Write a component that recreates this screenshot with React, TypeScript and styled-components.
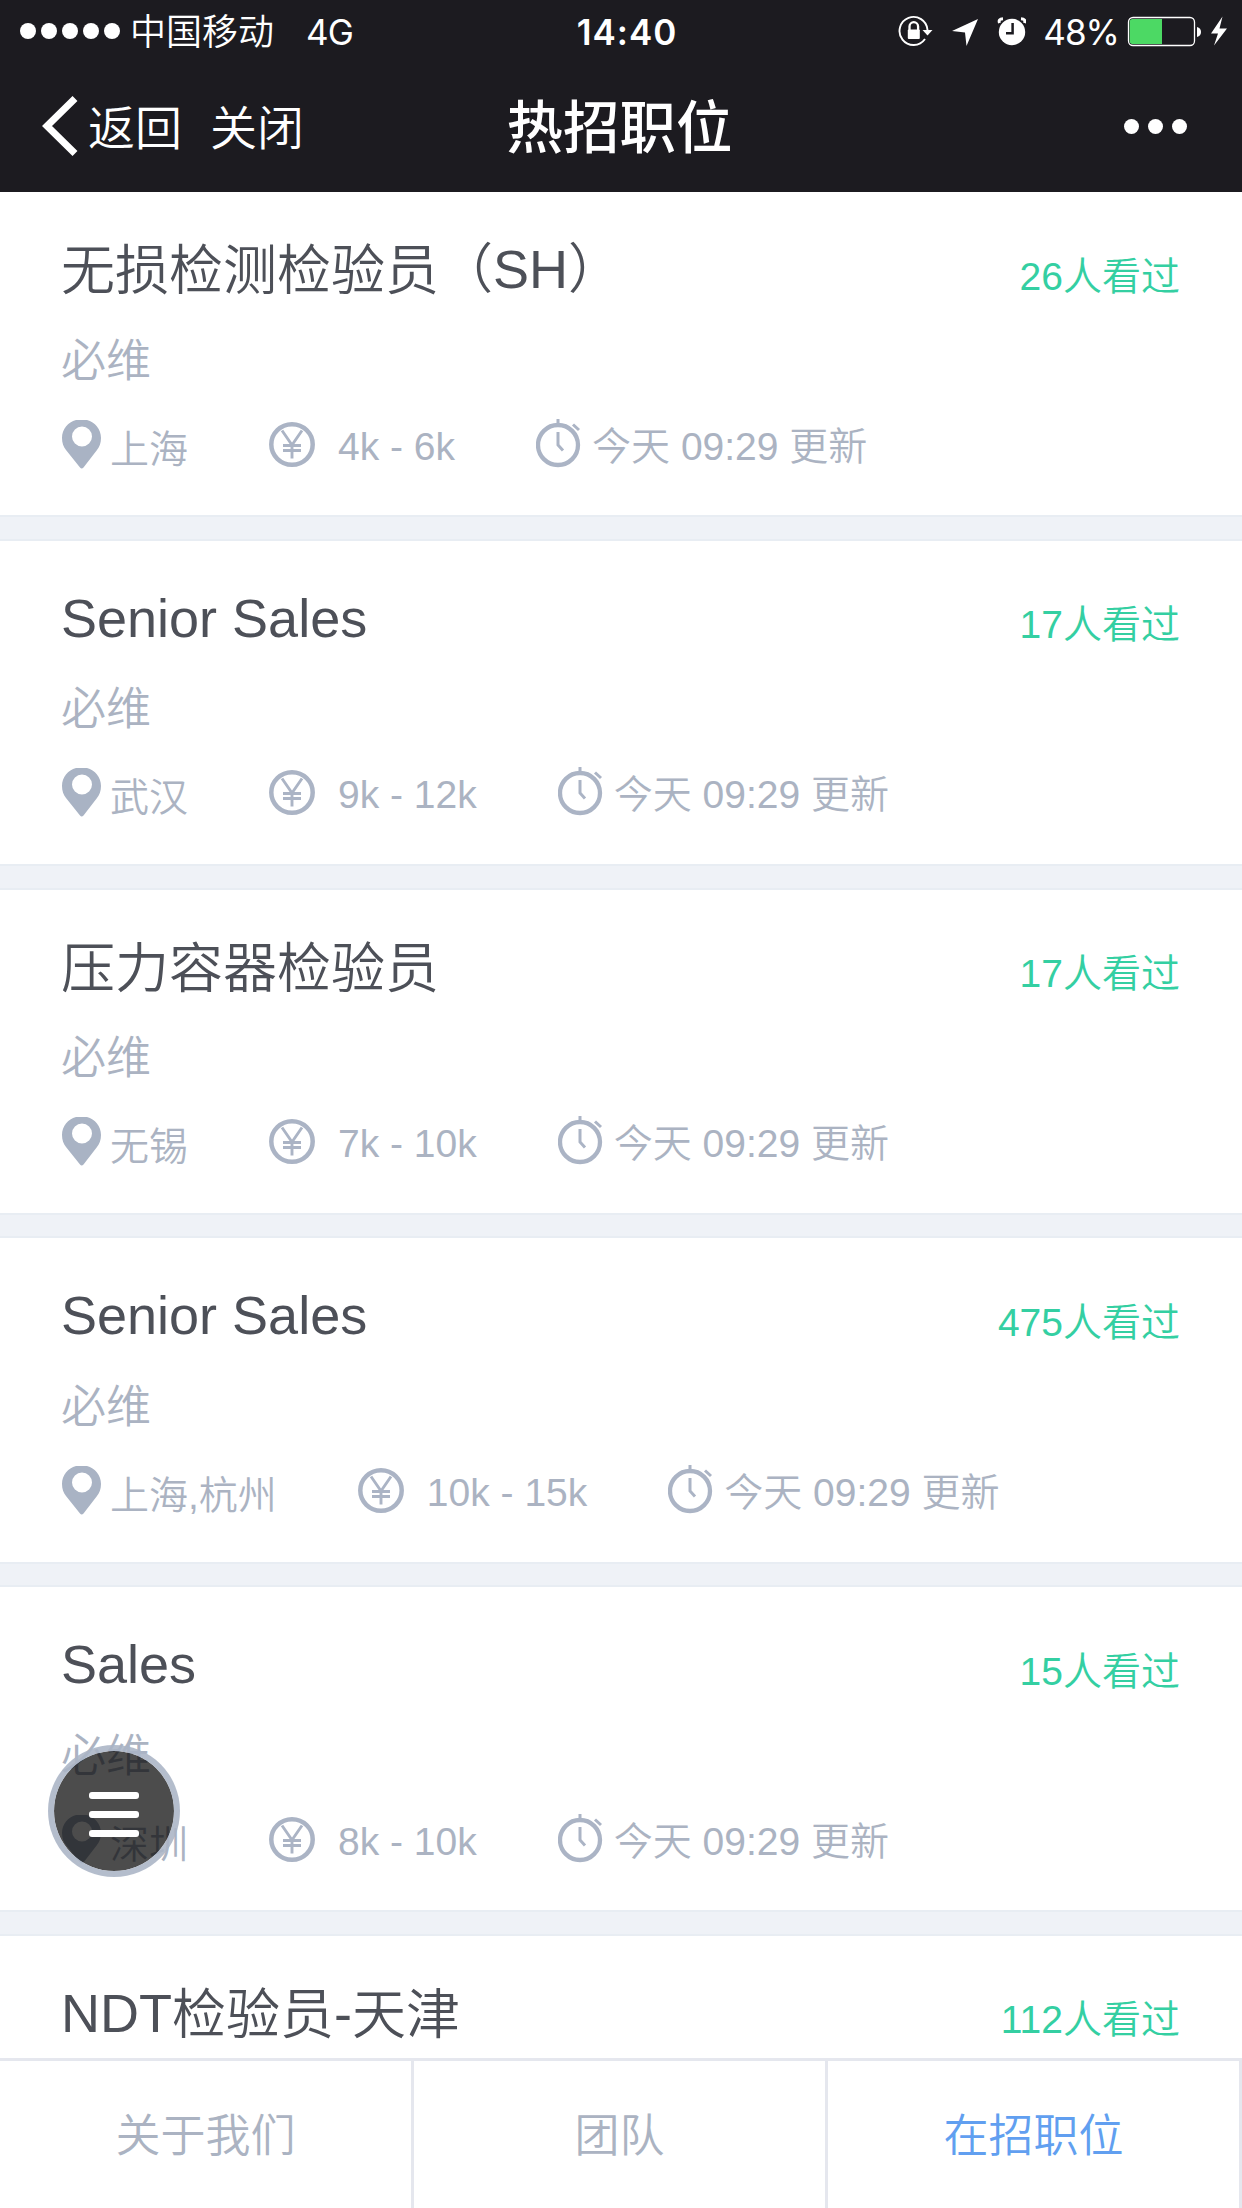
import React from "react";
import styled, { createGlobalStyle } from "styled-components";

const GlobalStyle = createGlobalStyle`
  * { box-sizing: border-box; }
  html, body { margin: 0; padding: 0; background: #fff; }
  body {
    font-family: "Liberation Sans", "Noto Sans CJK SC", sans-serif;
    font-weight: 350;
  }
`;

const Screen = styled.div`
  width: 1242px;
  height: 2208px;
  overflow: hidden;
  display: flex;
  flex-direction: column;
  background: #fff;
  position: relative;
`;

const Header = styled.header`
  flex: none;
  height: 192px;
  background: #1c1b20;
  color: #fff;
`;

const StatusBar = styled.div`
  height: 60px;
  display: grid;
  grid-template-columns: 1fr auto 1fr;
  align-items: center;
  padding: 0 15px 0 20px;
  font-family: Inter, "Noto Sans CJK SC", sans-serif;
  font-size: 35px;
  line-height: 60px;
  white-space: nowrap;
`;

const StatusGroup = styled.div<{ $end?: boolean }>`
  display: flex;
  align-items: center;
  height: 60px;
  justify-content: ${(p) => (p.$end ? "flex-end" : "flex-start")};
`;

const Dots = styled.div<{ $size: number; $gap: number }>`
  display: flex;
  gap: ${(p) => p.$gap}px;
  i {
    width: ${(p) => p.$size}px;
    height: ${(p) => p.$size}px;
    border-radius: 50%;
    background: #fff;
  }
`;

const Carrier = styled.span`
  margin-left: 10px;
  padding-bottom: 4px;
  font-family: "Noto Sans CJK SC", sans-serif;
  font-size: 36px;
`;

const Network = styled.span`
  margin-left: 32px;
  padding-top: 2px;
  font-size: 35px;
  font-weight: 400;
  letter-spacing: -0.8px;
`;

const Clock = styled.span`
  margin-left: 7px;
  padding-top: 2px;
  font-size: 35px;
  font-weight: 600;
  letter-spacing: 1px;
`;

const Percent = styled.span`
  margin: 0 8px 0 17px;
  padding-top: 2px;
  font-weight: 400;
  letter-spacing: -1px;
`;

const NavBar = styled.div`
  height: 132px;
  display: grid;
  grid-template-columns: 1fr auto 1fr;
  align-items: center;
  padding: 0 44px 0 41px;
`;

const NavActions = styled.div`
  display: flex;
  align-items: center;
  font-size: 47px;
  line-height: 60px;
`;

const NavText = styled.span<{ $left: number }>`
  margin-left: ${(p) => p.$left}px;
  padding-top: 5px;
`;

const NavTitle = styled.h1`
  margin: 0;
  padding-top: 5px;
  font-size: 56.5px;
  line-height: 60px;
  font-weight: 500;
`;

const MoreButton = styled.div`
  justify-self: end;
  margin-right: 11px;
`;

const List = styled.main`
  flex: 1;
  min-height: 0;
  overflow: hidden;
  display: flex;
  flex-direction: column;
  gap: 21.5px;
  background: #eff2f7;
`;

const Card = styled.article`
  flex: none;
  height: 327.25px;
  padding: 50px 62px 0 61px;
  background: #fff;
  border: solid #e8edf3;
  border-width: 2px 0;
  &:first-child { margin-top: -2px; }
`;

const TitleRow = styled.div`
  display: flex;
  justify-content: space-between;
  height: 54px;
`;

const JobTitle = styled.h2`
  margin: 0;
  font-size: 54px;
  line-height: 54px;
  font-weight: 350;
  color: #4d5058;
  white-space: nowrap;
`;

const Han = styled.span`
  vertical-align: -2px;
`;

const Views = styled.span`
  margin-top: 14.5px;
  font-size: 39px;
  line-height: 39px;
  color: #34cfa2;
  white-space: nowrap;
`;

const Company = styled.div`
  margin-top: 42.5px;
  font-size: 45px;
  line-height: 45px;
  color: #abb3c2;
`;

const MetaRow = styled.div`
  margin-top: 34px;
  height: 52px;
  display: flex;
  align-items: flex-start;
  gap: 81px;
  font-size: 39px;
  line-height: 39px;
  color: #abb3c2;
  white-space: nowrap;
`;

const Meta = styled.div<{ $gap: number; $iconTop: number; $textTop: number }>`
  display: flex;
  align-items: flex-start;
  gap: ${(p) => p.$gap}px;
  svg { margin-top: ${(p) => p.$iconTop}px; flex: none; }
  span { margin-top: ${(p) => p.$textTop}px; }
`;

const TabBar = styled.nav`
  flex: none;
  height: 150px;
  border-top: 3px solid #e5e7ee;
  display: grid;
  grid-template-columns: repeat(3, 1fr);
  background: #fff;
`;

const Tab = styled.div<{ $active?: boolean }>`
  border-right: 3px solid #e5e7ee;
  padding-top: 53px;
  text-align: center;
  font-size: 45px;
  line-height: 45px;
  color: ${(p) => (p.$active ? "#619ff0" : "#abb3c2")};
`;

const MenuButton = styled.button`
  position: absolute;
  left: 48px;
  top: 1745px;
  width: 132px;
  height: 132px;
  padding: 7px 0 0;
  border-radius: 50%;
  border: 6px solid rgba(170, 180, 197, 0.88);
  background: rgba(0, 0, 0, 0.7);
  background-clip: padding-box;
  display: flex;
  flex-direction: column;
  align-items: center;
  justify-content: center;
  gap: 12px;
  i {
    width: 50px;
    height: 7px;
    border-radius: 3px;
    background: #fff;
  }
`;

const PinIcon = () => (
  <svg width="40" height="49" viewBox="-1 0 40 49">
    <path
      fillRule="evenodd"
      fill="#a9b3c4"
      d="M14 0H25C33 2 39 9 39 18C39 23 37.500 27 35 30L21.500 47.500Q19.700 49.500 18 47.500L4 30C1.500 27 0 23 0 18C0 9 6 2 14 0ZM20 6.500A10 10 0 1 0 20 26.500A10 10 0 1 0 20 6.500Z"
    />
  </svg>
);

const YenIcon = () => (
  <svg width="46" height="45" viewBox="0 0 46 45" fill="none" stroke="#abb4c5">
    <ellipse cx="23" cy="22.500" rx="20.700" ry="20.200" strokeWidth="4.500" />
    <path d="M13 8.500L23 23L33 8.500M23 22V36.500M14 23.500H32M14 28.500H32" strokeWidth="2.900" />
  </svg>
);

const TimeIcon = () => (
  <svg width="45" height="49" viewBox="0 0 45 49" fill="none" stroke="#abb4c5">
    <circle cx="22" cy="26" r="20" strokeWidth="4.300" />
    <path d="M22 0V5M37 5.500L43 11" strokeWidth="3" />
    <path d="M22 13V26L27 31.500" strokeWidth="3" />
  </svg>
);

const BackIcon = () => (
  <svg width="38" height="60" viewBox="0 0 38 60">
    <path d="M34 2.500L6 30L34 57.500" fill="none" stroke="#fff" strokeWidth="7" />
  </svg>
);

const StatusIcons = () => (
  <svg width="128" height="60" viewBox="898 0 128 60">
    <g fill="none" stroke="#fff" strokeWidth="1.900">
      <path d="M927.500 29A14 14 0 1 0 925 38" />
      <path d="M909.500 30V25.500A4.300 4.300 0 0 1 918.100 25.500V30" strokeWidth="2.300" />
    </g>
    <rect x="907.800" y="28.500" width="12" height="9.500" rx="1" fill="#fff" />
    <path d="M922.500 29H932.500L927.500 34.500Z" fill="#fff" />
    <path d="M978 18L952 30L965 31.500L966.500 45Z" fill="#fff" />
    <circle cx="1012" cy="31" r="13.200" fill="#fff" />
    <path
      d="M999.500 22Q998 18 1003 17.700M1024.500 22Q1026 18 1021 17.700"
      fill="none"
      stroke="#fff"
      strokeWidth="3"
    />
    <path d="M1012.600 22V32.300H1006" fill="none" stroke="#1c1b20" strokeWidth="2.500" />
  </svg>
);

const BatteryIcon = () => (
  <svg width="100" height="60" viewBox="1127 0 100 60">
    <rect x="1128.500" y="16.500" width="66" height="28" rx="4.500" fill="none" stroke="#fff" strokeWidth="1.300" />
    <path d="M1132.500 18H1162V43H1132.500Q1129.700 43 1129.700 40V21Q1129.700 18 1132.500 18Z" fill="#4cd964" />
    <path d="M1197 26Q1201 27 1201 31Q1201 35 1197 36Z" fill="#fff" />
    <path d="M1222.500 15.500L1211 32.500H1218L1214 44.500L1227 27.500H1219.500Z" fill="#fff" />
  </svg>
);

interface Job {
  title: string;
  views: number;
  city: string;
  salary: string;
}

const jobs: Job[] = [
  { title: "无损检测检验员（SH）", views: 26, city: "上海", salary: "4k - 6k" },
  { title: "Senior Sales", views: 17, city: "武汉", salary: "9k - 12k" },
  { title: "压力容器检验员", views: 17, city: "无锡", salary: "7k - 10k" },
  { title: "Senior Sales", views: 475, city: "上海,杭州", salary: "10k - 15k" },
  { title: "Sales", views: 15, city: "深圳", salary: "8k - 10k" },
];

/* Han runs sit slightly below the Latin baseline. */
const Mixed = ({ text }: { text: string }) => (
  <>
    {text
      .split(/([\u4e00-\u9fff]+)/)
      .map((run, i) => (i % 2 ? <Han key={i}>{run}</Han> : run))}
  </>
);

const TitleLine = ({ title, views }: { title: string; views: number }) => (
  <TitleRow>
    <JobTitle>
      <Mixed text={title} />
    </JobTitle>
    <Views>{views}人看过</Views>
  </TitleRow>
);

const JobCard = ({ job }: { job: Job }) => (
  <Card>
    <TitleLine title={job.title} views={job.views} />
    <Company>必维</Company>
    <MetaRow>
      <Meta $gap={9} $iconTop={2} $textTop={12}>
        <PinIcon />
        <span>{job.city}</span>
      </Meta>
      <Meta $gap={23} $iconTop={4} $textTop={9}>
        <YenIcon />
        <span>{job.salary}</span>
      </Meta>
      <Meta $gap={11} $iconTop={1} $textTop={9}>
        <TimeIcon />
        <span>今天 09:29 更新</span>
      </Meta>
    </MetaRow>
  </Card>
);

export default function App() {
  return (
    <>
      <GlobalStyle />
      <Screen>
        <Header>
          <StatusBar>
            <StatusGroup>
              <Dots $size={16} $gap={5}>
                <i /><i /><i /><i /><i />
              </Dots>
              <Carrier>中国移动</Carrier>
              <Network>4G</Network>
            </StatusGroup>
            <Clock>14:40</Clock>
            <StatusGroup $end>
              <StatusIcons />
              <Percent>48%</Percent>
              <BatteryIcon />
            </StatusGroup>
          </StatusBar>
          <NavBar>
            <NavActions>
              <BackIcon />
              <NavText $left={9}>返回</NavText>
              <NavText $left={28}>关闭</NavText>
            </NavActions>
            <NavTitle>热招职位</NavTitle>
            <MoreButton>
              <Dots $size={15} $gap={9}>
                <i /><i /><i />
              </Dots>
            </MoreButton>
          </NavBar>
        </Header>
        <List>
          {jobs.map((job, i) => (
            <JobCard key={i} job={job} />
          ))}
          <Card>
            <TitleLine title="NDT检验员-天津" views={112} />
          </Card>
        </List>
        <TabBar>
          <Tab>关于我们</Tab>
          <Tab>团队</Tab>
          <Tab $active>在招职位</Tab>
        </TabBar>
        <MenuButton aria-label="菜单">
          <i /><i /><i />
        </MenuButton>
      </Screen>
    </>
  );
}
